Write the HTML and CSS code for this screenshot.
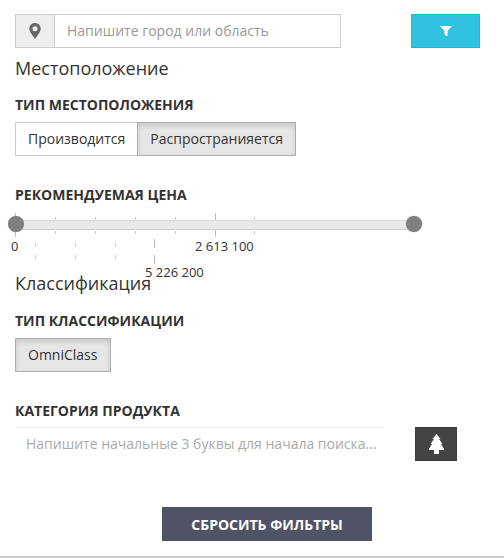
FILE: index.html
```html
<!DOCTYPE html>
<html lang="en">
<head>
    <meta charset="UTF-8">
    <title>Фильтры</title>
    <link rel="stylesheet" href="styles.css">
</head>
<body>
    <div class="filters">
        <!-- location search and filter toggle -->
        <div class="search-row">
            <div class="location-input">
                <span class="addon">
                    <svg width="12" height="16" viewBox="0 0 12 16"><path fill="#666" fill-rule="evenodd" d="M6 0C2.700 0 .3 2.400.3 5.600c0 3.200 3.600 7.600 5.700 10.400 2.100-2.800 5.700-7.200 5.700-10.400C11.700 2.400 9.300 0 6 0zm0 3.200a2.500 2.500 0 1 1 0 5 2.500 2.500 0 0 1 0-5z"/></svg>
                </span>
                <span class="placeholder">Напишите город или область</span>
            </div>
            <button class="filter-btn">
                <svg width="12" height="12" viewBox="0 0 12 12"><path fill="#fff" d="M0 1h12L7.500 6v5.500L4.500 9.500V6z"/></svg>
            </button>
        </div>

        <h3 class="section-title first">Местоположение</h3>
        <h4 class="label type-label">Тип местоположения</h4>
        <div class="toggle-group">
            <span class="toggle">Производится</span>
            <span class="toggle active">Распространияется</span>
        </div>

        <h4 class="label price-label">Рекомендуемая цена</h4>
        <!-- slider -->
        <div class="slider">
            <div class="track"></div>
            <span class="tick big t0"></span>
            <span class="tick t1"></span>
            <span class="tick t2"></span>
            <span class="tick t3"></span>
            <span class="tick t4"></span>
            <span class="tick big t5"></span>
            <span class="tick t6"></span>
            <span class="tick low t7"></span>
            <span class="tick low t8"></span>
            <span class="tick low t9"></span>
            <span class="tick low big t10"></span>
            <span class="handle handle-left"></span>
            <span class="handle handle-right"></span>
            <span class="num n0">0</span>
            <span class="num n1">2 613 100</span>
            <span class="num n2">5 226 200</span>
        </div>

        <h3 class="section-title second">Классификация</h3>
        <h4 class="label class-label">Тип классификации</h4>
        <div class="toggle-group">
            <span class="toggle active omni">OmniClass</span>
        </div>

        <h4 class="label cat-label">Категория продукта</h4>
        <div class="category-row">
            <div class="category-input">Напишите начальные 3 буквы для начала поиска...</div>
            <button class="tree-btn">
                <svg width="15" height="20" viewBox="0 0 15 20"><path fill="#fff" d="M7.500 0L11.500 5H10l3.500 5h-1.500L15 15v1h-5v4H5v-4H0v-1l3-5H1.500L5 5H3.500z"/></svg>
            </button>
        </div>

        <div class="reset-row">
            <button class="reset-btn">Сбросить фильтры</button>
        </div>
    </div>
</body>
</html>
```

FILE: styles.css
```css
* {
    margin: 0;
    padding: 0;
    box-sizing: border-box;
}

body {
    font-family: "Open Sans", "Noto Sans", sans-serif;
    color: #333;
    background: #fff;
    height: 558px;
    overflow: hidden;
}

.filters {
    height: 558px;
    padding: 14px 0 0 15px;
    border-bottom: 2px solid #ccc;
}

.search-row {
    display: flex;
}

.location-input {
    width: 326px;
    height: 34px;
    display: flex;
    border: 1px solid #ccc;
    background: #fff;
}

.addon {
    width: 39px;
    background: #eee;
    border-right: 1px solid #ccc;
    display: flex;
    align-items: center;
    justify-content: center;
}

.placeholder {
    padding-left: 12px;
    font-size: 14px;
    line-height: 32px;
    color: #999;
}

.filter-btn {
    width: 69px;
    height: 34px;
    margin-left: 70px;
    background: #31c2e1;
    border: 1px solid #2ab5d3;
    display: flex;
    align-items: center;
    justify-content: center;
}

.section-title {
    font-size: 18px;
    font-weight: 400;
    line-height: 24px;
    color: #333;
}

.section-title.first {
    margin-top: 8px;
}

.label {
    font-size: 14px;
    font-weight: 700;
    line-height: 20px;
    text-transform: uppercase;
    color: #333;
}

.type-label {
    margin-top: 15px;
}

.toggle-group {
    display: flex;
    margin-top: 7px;
}

.toggle {
    height: 34px;
    padding: 0 12px;
    font-size: 14px;
    line-height: 32px;
    color: #333;
    background: #fff;
    border: 1px solid #ccc;
}

.toggle.active {
    margin-left: -1px;
    background: #e6e6e6;
    border-color: #adadad;
    box-shadow: inset 0 3px 5px rgba(0, 0, 0, .125);
}

.toggle-group .toggle.active:first-child {
    margin-left: 0;
}

.toggle.omni {
    padding-right: 13px;
}

.price-label {
    margin-top: 29px;
}

/* slider lays its ticks and numbers on a free canvas */
.slider {
    position: relative;
    height: 75px;
    margin-left: -15px;
}

.track {
    position: absolute;
    left: 15px;
    top: 15px;
    width: 399px;
    height: 10px;
    background: #e8e8e8;
    border-bottom: 1px solid #ccc;
    border-top: 1px solid #ddd;
}

.handle {
    position: absolute;
    top: 11px;
    width: 16px;
    height: 16px;
    border-radius: 50%;
    background: #808080;
    box-shadow: 0 0 1px #aaa;
}

.handle-left {
    left: 8px;
}

.handle-right {
    left: 406px;
}

.tick {
    position: absolute;
    width: 1px;
    top: 12px;
    height: 3px;
    background: #ccc;
    box-shadow: 0 14px 0 #ccc;
}

.tick.big {
    top: 8px;
    height: 7px;
    background: #bbb;
    box-shadow: 0 17px 0 #bbb;
}

.t0 { left: 15px; }
.t1 { left: 55px; }
.t2 { left: 95px; }
.t3 { left: 135px; }
.t4 { left: 175px; }
.t5 { left: 215px; }
.t6 { left: 254px; }
.t7 { left: 35px; }
.t8 { left: 75px; }
.t9 { left: 115px; }
.t10 { left: 154px; }

.tick.low {
    top: 38px;
    height: 4px;
    box-shadow: 0 12px 0 #ccc;
}

.tick.low.big {
    top: 34px;
    height: 9px;
    box-shadow: 0 16px 0 #bbb;
}

.num {
    position: absolute;
    font-size: 13px;
    line-height: 16px;
    color: #333;
    white-space: nowrap;
}

.n0 { left: 11px; top: 33px; }
.n1 { left: 195px; top: 33px; }
.n2 { left: 145px; top: 59px; }

.section-title.second {
    margin-top: -9px;
}

.class-label {
    margin-top: 16px;
}

.cat-label {
    margin-top: 29px;
}

.category-row {
    display: flex;
    margin-top: 6px;
}

.category-input {
    width: 370px;
    height: 34px;
    padding-left: 11px;
    font-size: 14px;
    line-height: 32px;
    color: #aaa;
    border-top: 1px solid #eee;
    border-radius: 3px;
    white-space: nowrap;
}

.tree-btn {
    width: 42px;
    height: 34px;
    margin-left: 30px;
    background: #444;
    border: 1px solid #3a3a3a;
    display: flex;
    align-items: center;
    justify-content: center;
}

.reset-row {
    margin-top: 46px;
    padding-left: 147px;
}

.reset-btn {
    width: 210px;
    height: 34px;
    background: #4f5365;
    border: 0;
    color: #fff;
    font-family: inherit;
    font-size: 14px;
    font-weight: 700;
    text-transform: uppercase;
}
```
